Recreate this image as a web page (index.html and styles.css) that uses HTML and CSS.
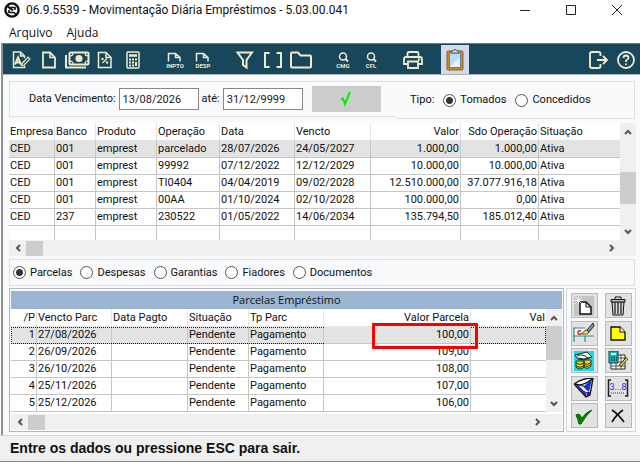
FILE: index.html
```html
<!DOCTYPE html>
<html lang="pt-BR">
<head>
    <meta charset="UTF-8">
    <meta name="viewport" content="width=device-width, initial-scale=1.0">
    <title>Movimentação Diária Empréstimos</title>
    <link rel="stylesheet" href="styles.css">
</head>
<body>
    <header class="titlebar">
        <svg class="app-icon" width="16" height="16" viewBox="0 0 16 16"><circle cx="8" cy="8" r="6.6" fill="#fff" stroke="#111" stroke-width="2.4"/><path d="M3 4L9 8.500" stroke="#111" stroke-width="2"/><path d="M5 5.500L11 5.500V8M5 8V10.500H10L12.500 13" fill="none" stroke="#111" stroke-width="1.600"/></svg>
        <h1>06.9.5539 - Movimentação Diária Empréstimos - 5.03.00.041</h1>
        <div class="window-buttons">
            <button aria-label="Minimizar"><svg width="12" height="12" viewBox="0 0 12 12"><path d="M1 6.500H11"/></svg></button>
            <button aria-label="Maximizar"><svg width="12" height="12" viewBox="0 0 12 12"><path d="M1.500 1.500H10.500V10.500H1.500Z"/></svg></button>
            <button aria-label="Fechar"><svg width="12" height="12" viewBox="0 0 12 12"><path d="M1 1L11 11M11 1L1 11"/></svg></button>
        </div>
    </header>

    <nav class="menu">
        <a href="#">Arquivo</a>
        <a href="#">Ajuda</a>
    </nav>

    <div class="window">
        <div class="toolbar">
            <div class="tool-group">
                <button aria-label="Alterar"><svg width="20" height="20" viewBox="0 0 20 20"><path d="M13.500 15.500V17.500H2.500V2H9.500L13.500 6V8M9.500 2V6H13.500"/><path d="M4 14.500L7 7.500L10 14.500M5 12.500H9" stroke-width="2"/><path d="M11 13.500L17 7L19 9L13 15L10.500 15.500Z" stroke-width="1.200"/></svg></button>
                <button aria-label="Novo"><svg width="20" height="20" viewBox="0 0 20 20"><path d="M4 2.500H11L16 7.500V17.500H4Z" stroke-width="1.800"/><path d="M11 2.500V7.500H16"/></svg></button>
                <button aria-label="Pagamento"><svg width="26" height="20" viewBox="0 0 26 20"><rect x="5.500" y="2.500" width="19" height="12" rx="1" stroke-width="2"/><circle cx="15" cy="8.500" r="3.600" class="fill"/><path d="M6 6Q9 6 9 3M24 6Q21 6 21 3M6 11Q9 11 9 14M24 11Q21 11 21 14" stroke-width="1.200"/><path d="M2 5V17.500H22" stroke-width="2"/></svg></button>
                <button aria-label="Percentual"><svg width="20" height="20" viewBox="0 0 20 20"><path d="M3.500 2.500H11L16 7.500V17.500H3.500ZM11 2.500V7.500H16"/><path d="M7.500 13L12 8.500" stroke-width="1.200"/><circle cx="7.500" cy="9" r=".5"/><circle cx="12" cy="12.500" r=".5"/></svg></button>
                <button aria-label="Calculadora"><svg width="20" height="20" viewBox="0 0 20 20"><rect x="4" y="2" width="12" height="16" rx="1"/><path d="M6 5.500H14" stroke-width="2.500"/><path d="M6 9.500H14M6 12.500H11M6 15.500H11" stroke-width="1.800" stroke-dasharray="2 1"/><path d="M13 12V16" stroke-width="2"/></svg></button>
            </div>
            <div class="tool-group">
                <button aria-label="Imposto"><svg width="24" height="20" viewBox="0 0 24 20"><path d="M5.500 11.500V3.500H12.500L17 7.500V11.500M12.500 3.500V7.500H17"/><text x="12" y="18">INPTO</text></svg></button>
                <button aria-label="Despesa"><svg width="24" height="20" viewBox="0 0 24 20"><path d="M5.500 11.500V3.500H12.500L17 7.500V11.500M12.500 3.500V7.500H17"/><text x="12" y="18">DESP</text></svg></button>
            </div>
            <div class="tool-group">
                <button aria-label="Filtro"><svg width="20" height="20" viewBox="0 0 20 20"><path d="M2.500 2.500H17L11.500 10V17.500L8 15V10Z" stroke-width="2"/></svg></button>
                <button aria-label="Intervalo"><svg width="20" height="20" viewBox="0 0 20 20"><path d="M6.500 3H2V17H6.500M13.500 3H18V17H13.500" stroke-width="2"/></svg></button>
                <button aria-label="Abrir"><svg width="24" height="20" viewBox="0 0 24 20"><path d="M2 3.500Q2 2.500 3 2.500H9L11.500 5.500H21Q22 5.500 22 6.500V16.500Q22 17.500 21 17.500H3Q2 17.500 2 16.500Z" stroke-width="2"/></svg></button>
            </div>
            <div class="tool-group">
                <button aria-label="Consulta CMG"><svg width="20" height="20" viewBox="0 0 20 20"><circle cx="10" cy="6.500" r="3.500"/><path d="M12.500 9L15 11.500" stroke-width="2"/><text x="10" y="18">CMG</text></svg></button>
                <button aria-label="Consulta CFL"><svg width="20" height="20" viewBox="0 0 20 20"><circle cx="10" cy="6.500" r="3.500"/><path d="M12.500 9L15 11.500" stroke-width="2"/><text x="10" y="18">CFL</text></svg></button>
            </div>
            <div class="tool-group">
                <button aria-label="Imprimir"><svg width="20" height="20" viewBox="0 0 20 20"><path d="M4.500 7V3.500Q4.500 2 6 2H14Q15.500 2 15.500 3.500V7M4.500 14H1V9Q1 7 3 7H17Q19 7 19 9V14H15.500M5 11.500H15V18H5Z" stroke-width="1.800"/><circle cx="16" cy="9.500" r=".5"/></svg></button>
            </div>
            <div class="tool-group">
                <button class="active" aria-label="Área de transferência"><svg width="18" height="22" viewBox="0 0 18 22"><rect x="1" y="2" width="16" height="19" rx="1" fill="#c58e24" stroke="#94651b" stroke-width="1"/><rect x="3.500" y="4" width="11" height="14.500" fill="#b9dcff" stroke="#5f83b7" stroke-width="1"/><path d="M5 17L14 8V18H5Z" fill="#e3f3ff" stroke="none"/><path d="M5 4H13V2H11L10 .8H8L7 2H5Z" fill="#ddd" stroke="#555" stroke-width="1"/></svg></button>
            </div>
            <div class="tool-group end">
                <button aria-label="Sair"><svg width="20" height="20" viewBox="0 0 20 20"><path d="M12.500 6V4Q12.500 2 10.500 2H4Q2 2 2 4V16Q2 18 4 18H10.500Q12.500 18 12.500 16V14M9 10H19M15 6L19 10L15 14" stroke-width="1.900"/></svg></button>
                <button aria-label="Ajuda"><svg width="20" height="20" viewBox="0 0 20 20"><circle cx="10" cy="10" r="8" stroke-width="1.800"/><path d="M7.500 8Q7.500 5.500 10 5.500T12.500 8Q12.500 9 10 10.500V12M10 13.500V15" stroke-width="1.800"/></svg></button>
            </div>
        </div>

        <main class="content">
            <form class="filters">
                <div class="period">
                    <label for="dataInicial">Data Vencimento:</label>
                    <input type="text" id="dataInicial" value="13/08/2026">
                    <label for="dataFinal">até:</label>
                    <input type="text" id="dataFinal" value="31/12/9999">
                    <button type="button" class="apply" aria-label="Aplicar"><svg width="12" height="16" viewBox="0 0 12 16"><path d="M1 9L3 7.500L5 13L10 1" fill="none" stroke="#00f000" stroke-width="2"/></svg></button>
                </div>
                <div class="type">
                    <span>Tipo:</span>
                    <label><input type="radio" name="tipo" checked>Tomados</label>
                    <label><input type="radio" name="tipo">Concedidos</label>
                </div>
            </form>

            <section class="grid loans">
                <div class="grid-view">
                    <table>
                        <colgroup>
                            <col class="w-46"><col class="w-41"><col class="w-61"><col class="w-63"><col class="w-75"><col class="w-76"><col class="w-90"><col class="w-78"><col>
                        </colgroup>
                        <thead>
                            <tr><th>Empresa</th><th>Banco</th><th>Produto</th><th>Operação</th><th>Data</th><th>Vencto</th><th class="num">Valor</th><th class="num">Sdo Operação</th><th>Situação</th></tr>
                        </thead>
                        <tbody>
                            <tr class="selected"><td>CED</td><td>001</td><td>emprest</td><td>parcelado</td><td>28/07/2026</td><td>24/05/2027</td><td class="num">1.000,00</td><td class="num">1.000,00</td><td>Ativa</td></tr>
                            <tr><td>CED</td><td>001</td><td>emprest</td><td>99992</td><td>07/12/2022</td><td>12/12/2029</td><td class="num">10.000,00</td><td class="num">10.000,00</td><td>Ativa</td></tr>
                            <tr><td>CED</td><td>001</td><td>emprest</td><td>TI0404</td><td>04/04/2019</td><td>09/02/2028</td><td class="num">12.510.000,00</td><td class="num">37.077.916,18</td><td>Ativa</td></tr>
                            <tr><td>CED</td><td>001</td><td>emprest</td><td>00AA</td><td>01/10/2024</td><td>02/10/2028</td><td class="num">100.000,00</td><td class="num">0,00</td><td>Ativa</td></tr>
                            <tr><td>CED</td><td>237</td><td>emprest</td><td>230522</td><td>01/05/2022</td><td>14/06/2034</td><td class="num">135.794,50</td><td class="num">185.012,40</td><td>Ativa</td></tr>
                            <tr class="blank"><td></td><td></td><td></td><td></td><td></td><td></td><td></td><td></td><td></td></tr>
                        </tbody>
                    </table>
                </div>
                <div class="vscroll">
                    <button aria-label="Acima"><svg width="8" height="6" viewBox="0 0 8 6"><path d="M1 5L4 2L7 5"/></svg></button>
                    <span class="track"><span class="thumb low"></span></span>
                    <button aria-label="Abaixo"><svg width="8" height="6" viewBox="0 0 8 6"><path d="M1 1L4 4L7 1"/></svg></button>
                </div>
                <div class="hscroll">
                    <button aria-label="Esquerda"><svg width="6" height="8" viewBox="0 0 6 8"><path d="M5 1L2 4L5 7"/></svg></button>
                    <span class="thumb"></span>
                    <button class="right" aria-label="Direita"><svg width="6" height="8" viewBox="0 0 6 8"><path d="M1 1L4 4L1 7"/></svg></button>
                </div>
            </section>

            <div class="views">
                <label><input type="radio" name="visao" checked>Parcelas</label>
                <label><input type="radio" name="visao">Despesas</label>
                <label><input type="radio" name="visao">Garantias</label>
                <label><input type="radio" name="visao">Fiadores</label>
                <label><input type="radio" name="visao">Documentos</label>
            </div>

            <div class="detail">
                <section class="installments">
                    <h2>Parcelas Empréstimo</h2>
                    <div class="grid">
                        <div class="grid-view">
                            <table>
                                <colgroup>
                                    <col class="w-26"><col class="w-75"><col class="w-76"><col class="w-61"><col class="w-75"><col class="w-147"><col>
                                </colgroup>
                                <thead>
                                    <tr><th class="num">/P</th><th>Vencto Parc</th><th>Data Pagto</th><th>Situação</th><th>Tp Parc</th><th class="num">Valor Parcela</th><th class="num">Val</th></tr>
                                </thead>
                                <tbody>
                                    <tr class="selected focused"><td class="num">1</td><td>27/08/2026</td><td></td><td>Pendente</td><td>Pagamento</td><td class="num marked">100,00<span class="marker"></span></td><td></td></tr>
                                    <tr><td class="num">2</td><td>26/09/2026</td><td></td><td>Pendente</td><td>Pagamento</td><td class="num">109,00</td><td></td></tr>
                                    <tr><td class="num">3</td><td>26/10/2026</td><td></td><td>Pendente</td><td>Pagamento</td><td class="num">108,00</td><td></td></tr>
                                    <tr><td class="num">4</td><td>25/11/2026</td><td></td><td>Pendente</td><td>Pagamento</td><td class="num">107,00</td><td></td></tr>
                                    <tr><td class="num">5</td><td>25/12/2026</td><td></td><td>Pendente</td><td>Pagamento</td><td class="num">106,00</td><td></td></tr>
                                </tbody>
                            </table>
                        </div>
                        <div class="vscroll">
                            <button aria-label="Acima"><svg width="8" height="6" viewBox="0 0 8 6"><path d="M1 5L4 2L7 5"/></svg></button>
                            <span class="track"><span class="thumb"></span></span>
                            <button aria-label="Abaixo"><svg width="8" height="6" viewBox="0 0 8 6"><path d="M1 1L4 4L7 1"/></svg></button>
                        </div>
                        <div class="hscroll">
                            <button aria-label="Esquerda"><svg width="6" height="8" viewBox="0 0 6 8"><path d="M5 1L2 4L5 7"/></svg></button>
                            <span class="thumb"></span>
                            <button class="right" aria-label="Direita"><svg width="6" height="8" viewBox="0 0 6 8"><path d="M1 1L4 4L1 7"/></svg></button>
                        </div>
                    </div>
                </section>

                <aside class="actions">
                    <button aria-label="Nova parcela"><svg width="20" height="20" viewBox="0 0 20 20"><path d="M0 0H20V20H0Z" fill="#c4c4c4"/><path d="M6 6H12L17 11V18H6Z" fill="#fff" stroke="#111" stroke-width="1.500"/><path d="M12 6V11H17" fill="none" stroke="#111"/><path d="M4.500 0V9M0 4.500H9M1 1L8 8M8 1L1 8" stroke="#eee"/></svg></button>
                    <button aria-label="Excluir"><svg width="20" height="20" viewBox="0 0 20 20"><path d="M4 6H16L15 19H5Z" fill="#ddd" stroke="#111"/><path d="M3 3.500H17V6H3Z" fill="#bbb" stroke="#111"/><path d="M7 3V1H13V3" fill="none" stroke="#111"/><path d="M7 7V18M10 7V18M13 7V18" stroke="#222" stroke-width="1.300"/></svg></button>
                    <button aria-label="Editar"><svg width="22" height="20" viewBox="0 0 22 20"><path d="M1 5H12V13H1Z" fill="#fff"/><path d="M0 5H12M1 5V19M0 13H21M12 13V19" fill="none" stroke="#199595" stroke-width="1.200"/><path d="M8 8Q4 7 5 10T9 10" fill="none" stroke="#e02020" stroke-width="1.500"/><path d="M9 11Q11 7 14 7L16 9Q15 12 9 11Z" fill="#f2e21c" stroke="#554"/><path d="M14 7L20 0L21 3L16 9Z" fill="#8a94b0" stroke="#223"/></svg></button>
                    <button aria-label="Anotação"><svg width="20" height="20" viewBox="0 0 20 20"><path d="M3 4H12L17 9V17H3Z" fill="#ff0" stroke="#111" stroke-width="1.300"/><path d="M12 4V9H17" fill="#fff" stroke="#111"/></svg></button>
                    <button aria-label="Valores"><svg width="20" height="20" viewBox="0 0 20 20"><path d="M0 0H20V20H0Z" fill="#19dbe5"/><path d="M1 4L13 1L18 6L10 8L3 7Z" fill="#fff" stroke="#222"/><path d="M3 5Q8 2 14 7M4 8L10 9L17 6" fill="none" stroke="#222"/><path d="M2 10V16Q6 20 10 16V10ZM10 9V16Q14 19 17 15V9Z" fill="#e4d51c" stroke="#332"/><path d="M2 12Q6 15 10 12Q14 15 17 11M2 14.500Q6 18 10 14.500Q14 17 17 13.500" fill="none" stroke="#332"/></svg></button>
                    <button aria-label="Calcular"><svg width="20" height="20" viewBox="0 0 20 20"><path d="M6 4H17V18H3V8" fill="#fff" stroke="#222"/><path d="M4 15H17M8 10V18M13 4V18M9 7H17M9 11H17" stroke="#555"/><path d="M1 0H10V12H1Z" fill="#15b9bd" stroke="#144"/><path d="M3 3H8" stroke="#dff" stroke-width="2"/><path d="M3 6.500H9M3 9H9" stroke="#133" stroke-width="1.500" stroke-dasharray="1.500 1"/><path d="M12 15L19 7" stroke="#222" stroke-width="3"/><path d="M12.500 14.500L19 7.500" stroke="#f2d024" stroke-width="1.800"/></svg></button>
                    <button aria-label="Filtrar parcelas"><svg width="20" height="20" viewBox="0 0 20 20"><path d="M0 6Q8 0 19 0L16 17L12 19Z" fill="#fff" stroke="#111" stroke-width="1.400"/><path d="M9 9L18 1L15 14Z" fill="#1c2fd2"/><path d="M1 6L12 18L10 8Z" fill="#1c2fd2" stroke="#111" stroke-width=".6"/><path d="M4 7L10 9L13 14L10 13Z" fill="#eee"/><path d="M2 6Q8 9 18 1" fill="none" stroke="#111" stroke-width="1.300"/><path d="M12 14H16V18H13Z" fill="#1723a0"/></svg></button>
                    <button aria-label="Faixa"><svg width="22" height="20" viewBox="0 0 22 20"><path d="M4 2H1.500V18H4M18 2H20.500V18H18" fill="none" stroke="#222" stroke-width="1.500"/><path d="M4 15H18" stroke="#333" stroke-dasharray="1 1"/><text x="11" y="12">3...8</text></svg></button>
                    <button aria-label="Confirmar"><svg width="20" height="20" viewBox="0 0 20 20"><path d="M2 9L5 8L8 12Q12 6 18 4Q12 9 7 18H5Q4 13 2 9Z" fill="#078207" stroke="#045f04"/></svg></button>
                    <button aria-label="Cancelar"><svg width="20" height="20" viewBox="0 0 20 20"><path d="M4 4Q10 8 16 16M15 4Q8 9 4 16" fill="none" stroke="#111" stroke-width="1.600"/></svg></button>
                </aside>
            </div>
        </main>
    </div>

    <footer class="statusbar">Entre os dados ou pressione ESC para sair.</footer>
</body>
</html>
```

FILE: styles.css
```css
* {
    box-sizing: border-box;
}
body {
    margin: 0;
    background-color: #fff;
    color: #111;
    font-family: Roboto, "Liberation Sans", sans-serif;
    font-size: 11px;
    line-height: 16px;
}
button {
    display: flex;
    align-items: center;
    justify-content: center;
    padding: 0;
    border: 0;
    background: none;
    font: inherit;
    flex-shrink: 0;
}
svg {
    display: block;
    flex-shrink: 0;
}

/* Title and menu */
.titlebar {
    display: flex;
    align-items: center;
    height: 20px;
    padding-left: 4px;
}
.titlebar h1 {
    flex: 1;
    margin: 0 0 0 6px;
    font-size: 12px;
    font-weight: normal;
    white-space: nowrap;
}
.window-buttons {
    display: flex;
}
.window-buttons button {
    width: 46px;
    height: 20px;
}
.window-buttons svg {
    fill: none;
    stroke: #222;
}
.menu {
    display: flex;
    gap: 14px;
    height: 23px;
    padding: 5px 9px 0;
    font-family: "Open Sans", "Noto Sans", sans-serif;
    font-size: 12px;
}
.menu a {
    color: #111;
    text-decoration: none;
}
.window {
    margin-left: 1px;
    border-top: 1px solid #777;
    border-left: 2px solid #8b9093;
    background-color: #f8fafc;
}

/* Toolbar */
.toolbar {
    display: flex;
    gap: 14px;
    height: 31px;
    padding: 1px 0 0 4px;
    background-color: #18475b;
    border-bottom: 1px solid #a8b4ba;
}
.tool-group {
    display: flex;
}
.tool-group.end {
    margin-left: auto;
}
.toolbar button {
    width: 28px;
    height: 29px;
}
.toolbar .active {
    background-color: #d3daec;
}
.toolbar svg {
    fill: none;
    stroke: #eeeacb;
    stroke-width: 1.5;
}
.toolbar text {
    fill: #eeeacb;
    stroke: none;
    font-size: 6px;
    font-weight: bold;
    text-anchor: middle;
}
.toolbar .fill {
    fill: #eeeacb;
    stroke: none;
}

/* Filters */
.content {
    padding: 6px 4px 3px 6px;
}
.filters {
    display: flex;
    align-items: flex-start;
    margin-right: 1px;
}
.period,
.type {
    display: flex;
    align-items: center;
    border: 1px solid #dcdee0;
}
.period {
    flex: 1;
    gap: 3px;
    height: 36px;
    padding-left: 19px;
    border-right: 0;
}
.period input {
    width: 80px;
    height: 22px;
    padding: 0 3px;
    border: 1px solid #888;
    background-color: #fff;
    color: #222;
    font: inherit;
}
.apply {
    width: 69px;
    height: 26px;
    margin-left: 6px;
    background-color: #ccc;
}
.type {
    flex: 0 0 239px;
    gap: 9px;
    height: 38px;
    padding-left: 14px;
    border-left: 0;
}
label {
    display: flex;
    align-items: center;
    gap: 4px;
    white-space: nowrap;
}
input[type="radio"] {
    appearance: none;
    width: 13px;
    height: 13px;
    margin: 0;
    border: 1px solid #555;
    border-radius: 50%;
    background-color: #fff;
}
input[type="radio"]:checked {
    background-image: radial-gradient(circle, #333 3px, transparent 4px);
}

/* Data grids */
.grid {
    display: grid;
    grid-template-columns: 1fr 16px;
    background-color: #fff;
}
.loans {
    margin-top: 4px;
}
.grid-view {
    overflow: hidden;
}
table {
    width: 100%;
    table-layout: fixed;
    border-collapse: separate;
    border-spacing: 0;
}
.w-26 { width: 26px; }
.w-41 { width: 41px; }
.w-46 { width: 46px; }
.w-61 { width: 61px; }
.w-63 { width: 63px; }
.w-75 { width: 75px; }
.w-76 { width: 76px; }
.w-78 { width: 78px; }
.w-90 { width: 90px; }
.w-147 { width: 147px; }
th,
td {
    height: 17px;
    padding: 0 1px;
    border-right: 1px solid #c6c6c6;
    border-bottom: 1px solid #c6c6c6;
    line-height: 16px;
    text-align: left;
    white-space: nowrap;
}
th {
    height: 18px;
    border-right-color: #e4e4e4;
    border-bottom-color: #e4e4e4;
    font-weight: normal;
}
th:last-child,
td:last-child {
    border-right: 0;
}
.num {
    text-align: right;
}
.selected td {
    background-color: #e3e3e3;
}
.blank td {
    height: 14px;
    border-bottom: 0;
}
.focused {
    outline: 1px dotted #222;
    outline-offset: -1px;
}
.marked {
    position: relative;
}
.marker {
    position: absolute;
    z-index: 1;
    top: -4px;
    right: -8px;
    width: 106px;
    height: 26px;
    border: 3px solid #f80000;
    border-radius: 1px;
}

/* Scroll bars */
.vscroll {
    display: flex;
    flex-direction: column;
    background-color: #f0f0f0;
}
.vscroll button {
    width: 16px;
    height: 17px;
}
.track {
    display: flex;
    flex-direction: column;
    flex: 1;
}
.thumb {
    background-color: #cdcdcd;
}
.vscroll .thumb {
    height: 34px;
}
.vscroll .low {
    height: 32px;
    margin-top: auto;
    margin-bottom: 19px;
}
.hscroll {
    display: flex;
    align-items: center;
    grid-column: 1 / -1;
    height: 16px;
    padding-right: 16px;
    background-color: #f0f0f0;
}
.hscroll button {
    width: 17px;
    height: 16px;
}
.hscroll .thumb {
    width: 17px;
    height: 15px;
}
.hscroll .right {
    margin-left: auto;
}
.vscroll svg,
.hscroll svg {
    fill: none;
    stroke: #555;
    stroke-width: 2;
}

/* View selector */
.views {
    display: flex;
    gap: 8px;
    height: 27px;
    margin: 3px 1px 2px 0;
    padding-left: 3px;
    border: 1px solid #dcdee0;
}

/* Installments and actions */
.detail {
    display: flex;
    gap: 2px;
}
.installments {
    flex: 1;
    min-width: 0;
    padding: 2px 1px 1px;
    border: 1px solid #b4b8bc;
}
.installments h2 {
    height: 18px;
    margin: 0;
    background-color: #9bb4d1;
    font-family: "Open Sans", "Noto Sans", sans-serif;
    font-size: 11px;
    font-weight: normal;
    line-height: 18px;
    text-align: center;
}
.installments .hscroll {
    margin-top: 2px;
}
.actions {
    display: grid;
    grid-template-columns: 27px 27px;
    align-content: space-between;
    justify-content: center;
    column-gap: 7px;
    width: 70px;
    padding: 4px 0 3px;
    border: 1px solid #d5d7d9;
}
.actions button {
    height: 25px;
    border: 1px solid #b8b8b8;
    background-color: #e2e2e2;
}
.actions svg {
    fill: none;
}
.actions text {
    fill: #2828f0;
    font-size: 9px;
    text-anchor: middle;
}

.statusbar {
    height: 27px;
    padding: 0 10px;
    border-top: 1px solid #d5d5d5;
    border-bottom: 1px solid #888;
    background-color: #f0f0f0;
    font-family: "Liberation Sans", Arial, sans-serif;
    font-size: 14px;
    font-weight: bold;
    line-height: 25px;
}
```
